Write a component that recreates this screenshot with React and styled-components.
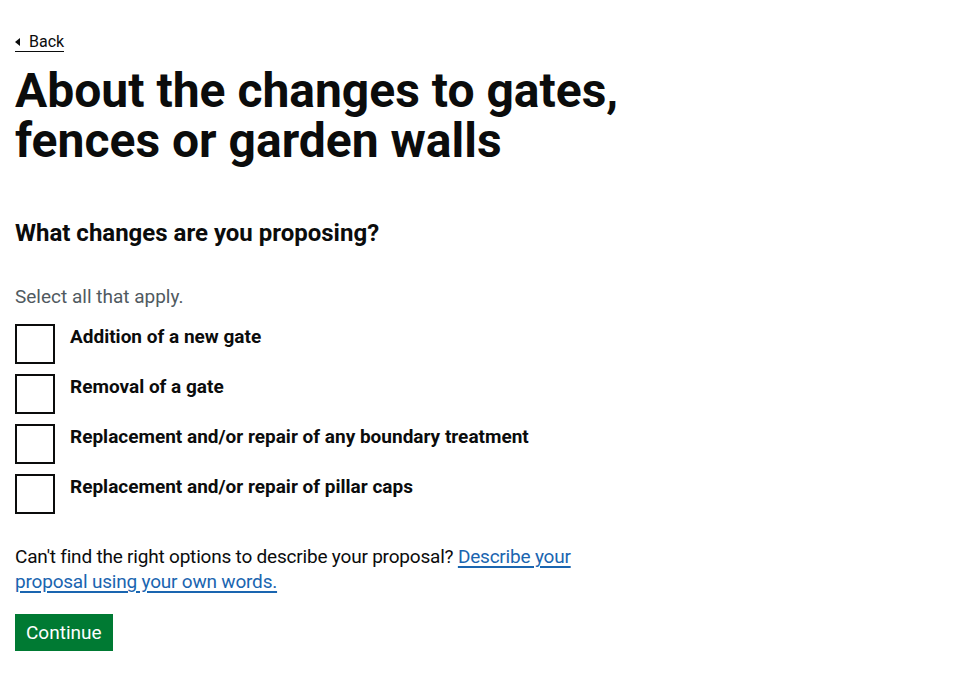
import React from "react";
import styled, { createGlobalStyle } from "styled-components";

const GlobalStyle = createGlobalStyle`
  body {
    margin: 0;
    background: #ffffff;
    color: #0b0c0c;
    font-family: Roboto, "Liberation Sans", Arial, sans-serif;
  }
`;

const Page = styled.main`
  padding: 32px 15px 0;
  max-width: 700px;
`;

const BackLink = styled.a`
  display: inline-block;
  position: relative;
  padding-left: 14px;
  font-size: 16px;
  line-height: 19px;
  color: #0b0c0c;
  text-decoration: none;
  border-bottom: 1px solid #0b0c0c;
  cursor: pointer;

  &::before {
    content: "";
    position: absolute;
    left: 0;
    top: 6px;
    border-style: solid;
    border-width: 4px 5px 4px 0;
    border-color: transparent #0b0c0c transparent transparent;
  }
`;

const Heading = styled.h1`
  margin: 14px 0 52px;
  font-size: 48px;
  line-height: 50px;
  font-weight: 700;
`;

const Fieldset = styled.fieldset`
  margin: 0;
  padding: 0;
  border: 0;
`;

const Legend = styled.legend`
  padding: 0;
  margin-bottom: 36px;
  font-size: 24px;
  line-height: 30px;
  font-weight: 700;
`;

const Hint = styled.div`
  margin-bottom: 15px;
  font-size: 19px;
  line-height: 25px;
  color: #505a5f;
`;

const Options = styled.div`
  display: flex;
  flex-direction: column;
  gap: 10px;
`;

const Option = styled.label`
  display: flex;
  align-items: flex-start;
  gap: 15px;
  cursor: pointer;
`;

const Box = styled.span`
  flex: none;
  width: 36px;
  height: 36px;
  border: 2px solid #0b0c0c;
  background: #ffffff;
`;

const OptionText = styled.span`
  font-size: 19px;
  line-height: 25px;
  font-weight: 700;
`;

const Paragraph = styled.p`
  margin: 30px 0 20px;
  font-size: 19px;
  line-height: 25px;
  letter-spacing: -0.2px;
  max-width: 570px;
`;

const TextLink = styled.a`
  color: #1a65b0;
  text-decoration: underline;
  text-underline-offset: 3px;
  text-decoration-thickness: 1.5px;
  cursor: pointer;
`;

const Button = styled.button`
  display: block;
  padding: 8px 11px 7px;
  border: 0;
  border-radius: 0;
  background: #007a33;
  box-shadow: 0 2px 0 #002d18;
  color: #ffffff;
  font-family: inherit;
  font-size: 19px;
  line-height: 22px;
  cursor: pointer;
`;

const options = [
  "Addition of a new gate",
  "Removal of a gate",
  "Replacement and/or repair of any boundary treatment",
  "Replacement and/or repair of pillar caps",
];

const App = () => {
  return (
    <>
      <GlobalStyle />
      <Page>
        <BackLink>Back</BackLink>
        <Heading>
          About the changes to gates,
          <br />
          fences or garden walls
        </Heading>
        <Fieldset>
          <Legend>What changes are you proposing?</Legend>
          <Hint>Select all that apply.</Hint>
          <Options>
            {options.map((label) => (
              <Option key={label}>
                <Box />
                <OptionText>{label}</OptionText>
              </Option>
            ))}
          </Options>
        </Fieldset>
        <Paragraph>
          Can't find the right options to describe your proposal?{" "}
          <TextLink>Describe your proposal using your own words.</TextLink>
        </Paragraph>
        <Button>Continue</Button>
      </Page>
    </>
  );
};

export default App;
